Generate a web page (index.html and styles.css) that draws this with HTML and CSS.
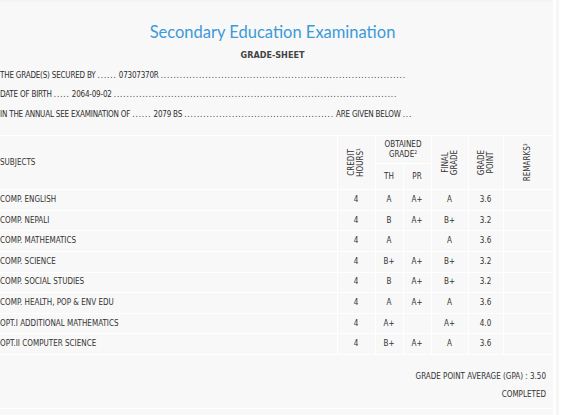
FILE: index.html
```html
<!DOCTYPE html>
<html>
<head>
<meta charset="utf-8">
<link rel="stylesheet" href="styles.css">
</head>
<body>
<div class="page">
  <div class="sheet">
    <h1 class="title">Secondary Education Examination</h1>
    <div class="subtitle">GRADE-SHEET</div>
    <div class="info">
      <p>THE GRADE(S) SECURED BY <span class="dots">......</span> 07307370R <span class="dots">.............................................................................</span></p>
      <p>DATE OF BIRTH <span class="dots">.....</span> 2064-09-02 <span class="dots">.........................................................................................</span></p>
      <p>IN THE ANNUAL SEE EXAMINATION OF <span class="dots">......</span> 2079 BS <span class="dots">...............................................</span> ARE GIVEN BELOW <span class="dots">...</span></p>
    </div>
    <table class="grades">
      <colgroup>
        <col class="c-sub"><col class="c-cr"><col class="c-th"><col class="c-pr"><col class="c-fg"><col class="c-gp"><col class="c-rm">
      </colgroup>
      <thead>
        <tr class="h1">
          <th rowspan="2" class="subj">SUBJECTS</th>
          <th rowspan="2"><div class="rot"><span>CREDIT</span><span>HOURS<sup>1</sup></span></div></th>
          <th colspan="2" class="og">OBTAINED<br>GRADE<sup>2</sup></th>
          <th rowspan="2"><div class="rot"><span>FINAL</span><span>GRADE</span></div></th>
          <th rowspan="2"><div class="rot"><span>GRADE</span><span>POINT</span></div></th>
          <th rowspan="2"><div class="rot"><span>REMARKS<sup>3</sup></span></div></th>
        </tr>
        <tr class="h2">
          <th>TH</th><th>PR</th>
        </tr>
      </thead>
      <tbody>
        <tr><td class="subj">COMP. ENGLISH</td><td>4</td><td>A</td><td>A+</td><td>A</td><td>3.6</td><td></td></tr>
        <tr><td class="subj">COMP. NEPALI</td><td>4</td><td>B</td><td>A+</td><td>B+</td><td>3.2</td><td></td></tr>
        <tr><td class="subj">COMP. MATHEMATICS</td><td>4</td><td>A</td><td></td><td>A</td><td>3.6</td><td></td></tr>
        <tr><td class="subj">COMP. SCIENCE</td><td>4</td><td>B+</td><td>A+</td><td>B+</td><td>3.2</td><td></td></tr>
        <tr><td class="subj">COMP. SOCIAL STUDIES</td><td>4</td><td>B</td><td>A+</td><td>B+</td><td>3.2</td><td></td></tr>
        <tr><td class="subj">COMP. HEALTH, POP &amp; ENV EDU</td><td>4</td><td>A</td><td>A+</td><td>A</td><td>3.6</td><td></td></tr>
        <tr><td class="subj">OPT.I ADDITIONAL MATHEMATICS</td><td>4</td><td>A+</td><td></td><td>A+</td><td>4.0</td><td></td></tr>
        <tr><td class="subj">OPT.II COMPUTER SCIENCE</td><td>4</td><td>B+</td><td>A+</td><td>A</td><td>3.6</td><td></td></tr>
      </tbody>
    </table>
    <div class="summary">
      <p>GRADE POINT AVERAGE (GPA) : 3.50</p>
      <p>COMPLETED</p>
    </div>
  </div>
  <div class="edge"></div>
</div>
</body>
</html>
```

FILE: styles.css
```css
html, body {
  margin: 0;
  padding: 0;
  background: #ffffff;
}
body {
  font-family: "DejaVu Sans Condensed", "DejaVu Sans", sans-serif;
  color: #333333;
  font-size: 8px;
}
.page {
  display: flex;
  align-items: flex-start;
}
.sheet {
  width: 553px;
  background: #f8f8f8;
  border-top: 2px solid #f4f4f4;
  padding-top: 19px;
  padding-bottom: 10px;
}
.edge {
  width: 3px;
  margin-left: 3px;
  height: 415px;
  background: #f6f6f6;
}
.title {
  margin: 0;
  text-align: center;
  font-family: "Lato", sans-serif;
  font-weight: 400;
  font-size: 16.5px;
  line-height: 22px;
  color: #3b9ad8;
  padding-right: 8px;
}
.subtitle {
  text-align: center;
  font-family: "DejaVu Sans Condensed", sans-serif;
  font-weight: bold;
  font-size: 9px;
  line-height: 12px;
  margin-top: 6px;
  padding-right: 8px;
  color: #444;
}
.info {
  margin-top: 5px;
  font-size: 8px;
  letter-spacing: -0.2px;
  color: #2e2e2e;
}
.info p {
  margin: 0;
  line-height: 19.4px;
  white-space: nowrap;
}
.dots {
  letter-spacing: 0.9px;
}
.grades {
  margin-top: 11px;
  width: 553px;
  border-collapse: collapse;
  table-layout: fixed;
  border-top: 1px solid #ffffff;
  border-bottom: 1px solid #ffffff;
}
.c-sub { width: 337px; }
.c-cr { width: 38px; }
.c-th { width: 28px; }
.c-pr { width: 28px; }
.c-fg { width: 37px; }
.c-gp { width: 35px; }
.c-rm { width: 50px; }
.grades th, .grades td {
  border: 1px solid #ffffff;
  padding: 0;
  text-align: center;
  vertical-align: middle;
  font-weight: normal;
  font-size: 8px;
  line-height: 8px;
}
.grades th.subj, .grades td.subj {
  text-align: left;
  border-left: none;
  font-size: 8px;
}
.grades tr > :last-child {
  border-right: none;
}
.h1 th { height: 27px; }
.h2 th { height: 25px; }
.grades tbody td { height: 19.6px; }
.og { line-height: 10px !important; }
sup {
  font-size: 5px;
  vertical-align: 3px;
  line-height: 0;
}
.rot {
  transform: rotate(-90deg);
  white-space: nowrap;
  line-height: 8.5px;
  width: 8px;
  margin: 0 auto;
  display: flex;
  flex-direction: column;
  align-items: center;
  justify-content: center;
}
.summary {
  border-bottom: 1px solid #ffffff;
  padding: 13px 7px 4px 0;
  text-align: right;
}
.summary p {
  margin: 0;
  line-height: 18px;
}
```
